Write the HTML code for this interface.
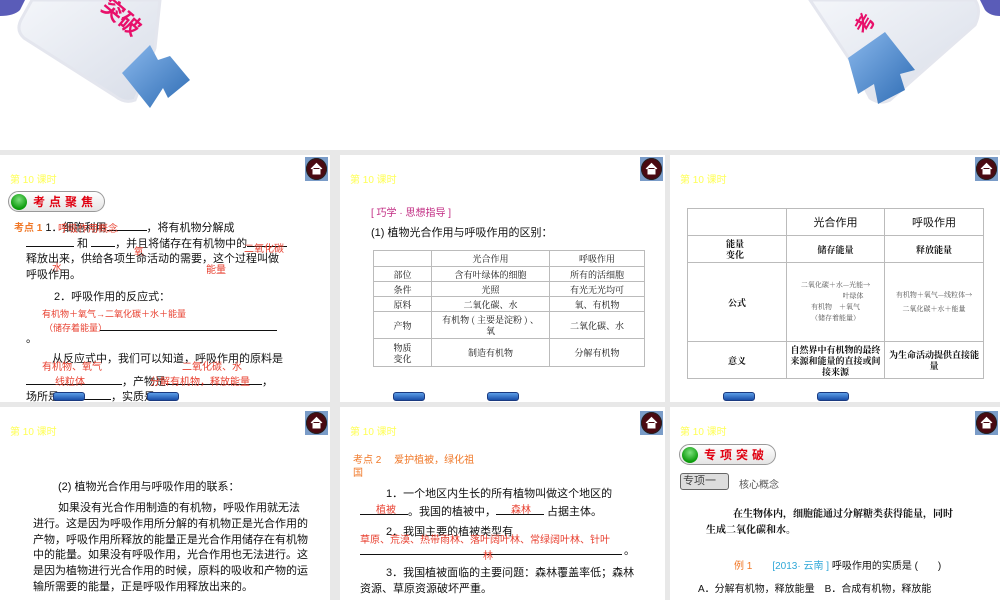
<!DOCTYPE html>
<html><head><meta charset="utf-8"><style>
*{margin:0;padding:0;box-sizing:border-box}
body{width:1000px;height:600px;overflow:hidden;background:#e8e8e8;position:relative;font-family:"Liberation Sans","Noto Sans CJK SC",sans-serif;color:#111}
.top{position:absolute;left:0;top:0;width:1000px;height:150px;background:#fff}
.s{position:absolute;background:#fff;overflow:hidden}
.a{position:absolute;white-space:nowrap}
.hd{position:absolute;left:10px;top:16px;font-size:10px;color:#ffff55}
.home{position:absolute;width:23px;height:24px;background:#7a9cc8;}
.home:after{content:"";position:absolute;left:1px;top:1px;width:21px;height:22px;border-radius:50%;background:#4a0a12;box-shadow:inset 0 0 0 1px #222}
.t{font-size:11px;line-height:16px}
.r{color:#e84030;font-size:10px}
.o{color:#f07828}
.nav{position:absolute;width:32px;height:9px;border-radius:3px;background:linear-gradient(#5c9ee8,#1a4ea8);border:1px solid #1a3a80}
table{position:absolute;border-collapse:collapse;font-family:"Noto Serif CJK SC","Liberation Serif",serif}
td{border:1px solid #bbb;text-align:center;font-size:9px;padding:0;line-height:11px}
.pill{position:absolute;height:21px;border-radius:11px;border:1px solid #999;background:linear-gradient(#fff,#e4e4e4);font-size:12px;font-weight:bold;color:#e00010;letter-spacing:4px;white-space:nowrap}
.pill b{position:absolute;left:2px;top:2px;width:16px;height:16px;border-radius:50%;background:radial-gradient(circle at 50% 35%,#7de07d,#0a9a0a 70%)}
.pill span{position:absolute;left:24px;top:1px}
.u{display:inline-block;border-bottom:1px solid #111;height:12px;vertical-align:baseline}
</style></head><body>
<div class="top">
<svg width="1000" height="150" style="position:absolute;left:0;top:0">
<defs><linearGradient id="pg" x1="0" y1="0" x2="1" y2="1"><stop offset="0" stop-color="#f4f6fa"/><stop offset="1" stop-color="#d8dde8"/></linearGradient>
<linearGradient id="ar" x1="0" y1="0" x2="1" y2="1"><stop offset="0" stop-color="#8ab8ec"/><stop offset="1" stop-color="#2e6cb4"/></linearGradient></defs>
<path d="M0 0 L25 0 L20 10 Q14 16 0 16Z" fill="#5a5cb8"/>
<path d="M32 0 L160 0 L155 48 L135 100 Q125 104 115 96 L24 38 Q15 30 22 18Z" fill="url(#pg)" stroke="#e4e6ee" stroke-width="3"/>
<path d="M122 73 L150 45 L158 60 L170 56 L190 80 L168 98 L163 88 L150 108 Z" fill="url(#ar)"/>
<text x="95" y="18" font-size="22" font-weight="bold" fill="#e8106a" transform="rotate(40 110 20)" font-family="Noto Sans CJK SC">突破</text>
<path d="M1000 0 L980 0 L985 10 Q990 16 1000 16Z" fill="#5a5cb8"/>
<path d="M810 0 L975 0 Q982 10 975 25 L890 100 Q880 105 870 98 L850 60Z" fill="url(#pg)" stroke="#e4e6ee" stroke-width="3"/>
<path d="M848 58 L885 32 L915 70 L900 74 L905 90 L878 104 L874 84 L858 94 Z" fill="url(#ar)"/>
<text x="850" y="22" font-size="20" font-weight="bold" fill="#e8106a" transform="rotate(-60 870 15)" font-family="Noto Sans CJK SC">考</text>
</svg>
</div>

<!-- Slide 1 -->
<div class="s" style="left:0;top:155px;width:330px;height:247px">
<div class="hd">第 10 课时</div>
<div class="home" style="left:305px;top:2px"><svg style="position:absolute;left:0;top:0;width:23px;height:24px;z-index:3"><path d="M6 12 L11.5 6.5 L17 12 M8 11 V17 H15 V11" fill="#fff" stroke="#fff" stroke-width="1"/></svg></div>
<div class="pill" style="left:8px;top:36px;width:97px"><b></b><span>考点聚焦</span></div>
<div class="a t" style="left:14px;top:64px"><span class="o" style="font-weight:bold;font-size:10px">考点 1</span> 1．细胞利用<span class="u" style="width:40px"></span>，将有机物分解成</div>
<div class="a r" style="left:58px;top:65px">呼吸作用概念</div>
<div class="a t" style="left:26px;top:80px"><span class="u" style="width:48px"></span> 和 <span class="u" style="width:24px"></span>，并且将储存在有机物中的<span class="u" style="width:40px"></span></div>
<div class="a r" style="left:134px;top:88px">氧</div><div class="a r" style="left:244px;top:85px">二氧化碳</div>
<div class="a t" style="left:26px;top:96px">释放出来，供给各项生命活动的需要，这个过程叫做</div>
<div class="a r" style="left:52px;top:104px">水</div><div class="a r" style="left:206px;top:106px">能量</div>
<div class="a t" style="left:26px;top:112px">呼吸作用。</div>
<div class="a t" style="left:54px;top:134px">2．呼吸作用的反应式：</div>
<div class="a r" style="left:42px;top:152px;font-size:9px">有机物＋氧气→二氧化碳＋水＋能量</div>
<div class="a r" style="left:44px;top:166px;font-size:9px">（储存着能量）</div>
<div style="position:absolute;left:100px;top:175px;width:177px;border-top:1px solid #111"></div>
<div class="a t" style="left:26px;top:176px">。</div>
<div class="a t" style="left:52px;top:196px">从反应式中，我们可以知道，呼吸作用的原料是</div>
<div class="a t" style="left:26px;top:218px"><span class="u" style="width:96px"></span>，产物是<span class="u" style="width:96px"></span>，</div>
<div class="a t" style="left:26px;top:233px">场所是<span class="u" style="width:52px"></span>，实质是</div>
<div class="a r" style="left:42px;top:203px">有机物、氧气</div><div class="a r" style="left:182px;top:203px">二氧化碳、水</div>
<div class="a r" style="left:55px;top:218px">线粒体</div><div class="a r" style="left:150px;top:218px">分解有机物，释放能量</div>
<div class="nav" style="left:53px;top:237px"></div><div class="nav" style="left:147px;top:237px"></div>
</div>

<!-- Slide 2 -->
<div class="s" style="left:340px;top:155px;width:325px;height:247px">
<div class="hd">第 10 课时</div>
<div class="home" style="left:300px;top:2px"><svg style="position:absolute;left:0;top:0;width:23px;height:24px;z-index:3"><path d="M6 12 L11.5 6.5 L17 12 M8 11 V17 H15 V11" fill="#fff" stroke="#fff"/></svg></div>
<div class="a" style="left:31px;top:49px;font-size:10px;color:#c02880">[ 巧学 · 思想指导 ]</div>
<div class="a t" style="left:31px;top:70px">(1) 植物光合作用与呼吸作用的区别：</div>
<table style="left:33px;top:95px;width:272px">
<tr style="height:16px"><td style="width:58px"></td><td style="width:118px">光合作用</td><td>呼吸作用</td></tr>
<tr style="height:15px"><td>部位</td><td>含有叶绿体的细胞</td><td>所有的活细胞</td></tr>
<tr style="height:15px"><td>条件</td><td>光照</td><td>有光无光均可</td></tr>
<tr style="height:15px"><td>原料</td><td>二氧化碳、水</td><td>氧、有机物</td></tr>
<tr style="height:27px"><td>产物</td><td>有机物 ( 主要是淀粉 ) 、<br>氧</td><td>二氧化碳、水</td></tr>
<tr style="height:28px"><td>物质<br>变化</td><td>制造有机物</td><td>分解有机物</td></tr>
</table>
<div class="nav" style="left:53px;top:237px"></div><div class="nav" style="left:147px;top:237px"></div>
</div>

<!-- Slide 3 -->
<div class="s" style="left:670px;top:155px;width:330px;height:247px">
<div class="hd">第 10 课时</div>
<div class="home" style="left:305px;top:2px"><svg style="position:absolute;left:0;top:0;width:23px;height:24px;z-index:3"><path d="M6 12 L11.5 6.5 L17 12 M8 11 V17 H15 V11" fill="#fff" stroke="#fff"/></svg></div>
<table style="left:17px;top:53px;width:297px">
<tr style="height:27px"><td style="width:99px"></td><td style="width:98px;font-size:11px;font-family:'Noto Sans CJK SC',sans-serif">光合作用</td><td style="font-size:11px;font-family:'Noto Sans CJK SC',sans-serif">呼吸作用</td></tr>
<tr style="height:27px"><td style="font-weight:bold;font-size:9px;text-align:left;padding-left:38px">能量<br>变化</td><td style="font-weight:bold;font-size:9px">储存能量</td><td style="font-weight:bold;font-size:9px">释放能量</td></tr>
<tr style="height:79px"><td style="font-weight:bold;font-size:9px">公式</td><td style="font-size:7px;line-height:11px;color:#555">二氧化碳＋水—光能→<br>　　　　　叶绿体<br>有机物　＋氧气<br>（储存着能量）</td><td style="font-size:7px;line-height:14px;color:#555">有机物＋氧气—线粒体→<br>二氧化碳＋水＋能量</td></tr>
<tr style="height:37px"><td style="font-weight:bold;font-size:9px">意义</td><td style="font-weight:bold;font-size:9px;line-height:11px">自然界中有机物的最终<br>来源和能量的直接或间<br>接来源</td><td style="font-weight:bold;font-size:9px;line-height:11px">为生命活动提供直接能<br>量</td></tr>
</table>
<div class="nav" style="left:53px;top:237px"></div><div class="nav" style="left:147px;top:237px"></div>
</div>

<!-- Row 2 Slide 1 -->
<div class="s" style="left:0;top:407px;width:330px;height:193px">
<div class="hd">第 10 课时</div>
<div class="home" style="left:305px;top:4px"><svg style="position:absolute;left:0;top:0;width:23px;height:24px;z-index:3"><path d="M6 12 L11.5 6.5 L17 12 M8 11 V17 H15 V11" fill="#fff" stroke="#fff"/></svg></div>
<div class="a t" style="left:58px;top:72px">(2) 植物光合作用与呼吸作用的联系：</div>
<div class="a t" style="left:33px;top:94px;line-height:15.8px;white-space:normal;width:275px;text-indent:25px">如果没有光合作用制造的有机物，呼吸作用就无法进行。这是因为呼吸作用所分解的有机物正是光合作用的产物，呼吸作用所释放的能量正是光合作用储存在有机物中的能量。如果没有呼吸作用，光合作用也无法进行。这是因为植物进行光合作用的时候，原料的吸收和产物的运输所需要的能量，正是呼吸作用释放出来的。</div>
</div>

<!-- Row 2 Slide 2 -->
<div class="s" style="left:340px;top:407px;width:325px;height:193px">
<div class="hd">第 10 课时</div>
<div class="home" style="left:300px;top:4px"><svg style="position:absolute;left:0;top:0;width:23px;height:24px;z-index:3"><path d="M6 12 L11.5 6.5 L17 12 M8 11 V17 H15 V11" fill="#fff" stroke="#fff"/></svg></div>
<div class="a o" style="left:13px;top:44px;font-size:10px">考点 2　 爱护植被，绿化祖</div>
<div class="a o" style="left:13px;top:57px;font-size:10px">国</div>
<div class="a t" style="left:46px;top:79px">1．一个地区内生长的所有植物叫做这个地区的</div>
<div class="a t" style="left:20px;top:96px"><span class="u" style="width:48px"></span>。我国的植被中，<span class="u" style="width:48px"></span> 占据主体。</div>
<div class="a r" style="left:36px;top:94px">植被</div><div class="a r" style="left:171px;top:94px">森林</div>
<div class="a t" style="left:46px;top:117px">2．我国主要的植被类型有</div>
<div class="a r" style="left:20px;top:124px">草原、荒漠、热带雨林、落叶阔叶林、常绿阔叶林、针叶</div>
<div style="position:absolute;left:20px;top:147px;width:262px;border-top:1px solid #111"></div>
<div class="a t" style="left:284px;top:136px">。</div>
<div class="a r" style="left:143px;top:140px">林</div>
<div class="a t" style="left:46px;top:158px">3．我国植被面临的主要问题：森林覆盖率低；森林</div>
<div class="a t" style="left:20px;top:174px">资源、草原资源破坏严重。</div>
</div>

<!-- Row 2 Slide 3 -->
<div class="s" style="left:670px;top:407px;width:330px;height:193px">
<div class="hd">第 10 课时</div>
<div class="home" style="left:305px;top:4px"><svg style="position:absolute;left:0;top:0;width:23px;height:24px;z-index:3"><path d="M6 12 L11.5 6.5 L17 12 M8 11 V17 H15 V11" fill="#fff" stroke="#fff"/></svg></div>
<div class="pill" style="left:9px;top:37px;width:97px"><b></b><span>专项突破</span></div>
<div class="a" style="left:10px;top:66px;width:49px;height:17px;border:1px solid #666;border-radius:3px;background:#ddd;font-size:11px;color:#444;line-height:15px;padding-left:2px">专项一</div>
<div class="a" style="left:69px;top:69px;font-size:10px;color:#555">核心概念</div>
<div class="a" style="left:63px;top:98px;font-size:10px;font-family:'Noto Serif CJK SC',serif;font-weight:bold">在生物体内，细胞能通过分解糖类获得能量，同时</div>
<div class="a" style="left:36px;top:114px;font-size:10px;font-family:'Noto Serif CJK SC',serif;font-weight:bold">生成二氧化碳和水。</div>
<div class="a" style="left:64px;top:150px;font-size:10px"><span class="o">例 1</span>　　<span style="color:#30a8d8">[2013· 云南 ]</span> 呼吸作用的实质是 (　　)</div>
<div class="a" style="left:28px;top:173px;font-size:10px">A．分解有机物，释放能量　B．合成有机物，释放能</div>
</div>
</body></html>
